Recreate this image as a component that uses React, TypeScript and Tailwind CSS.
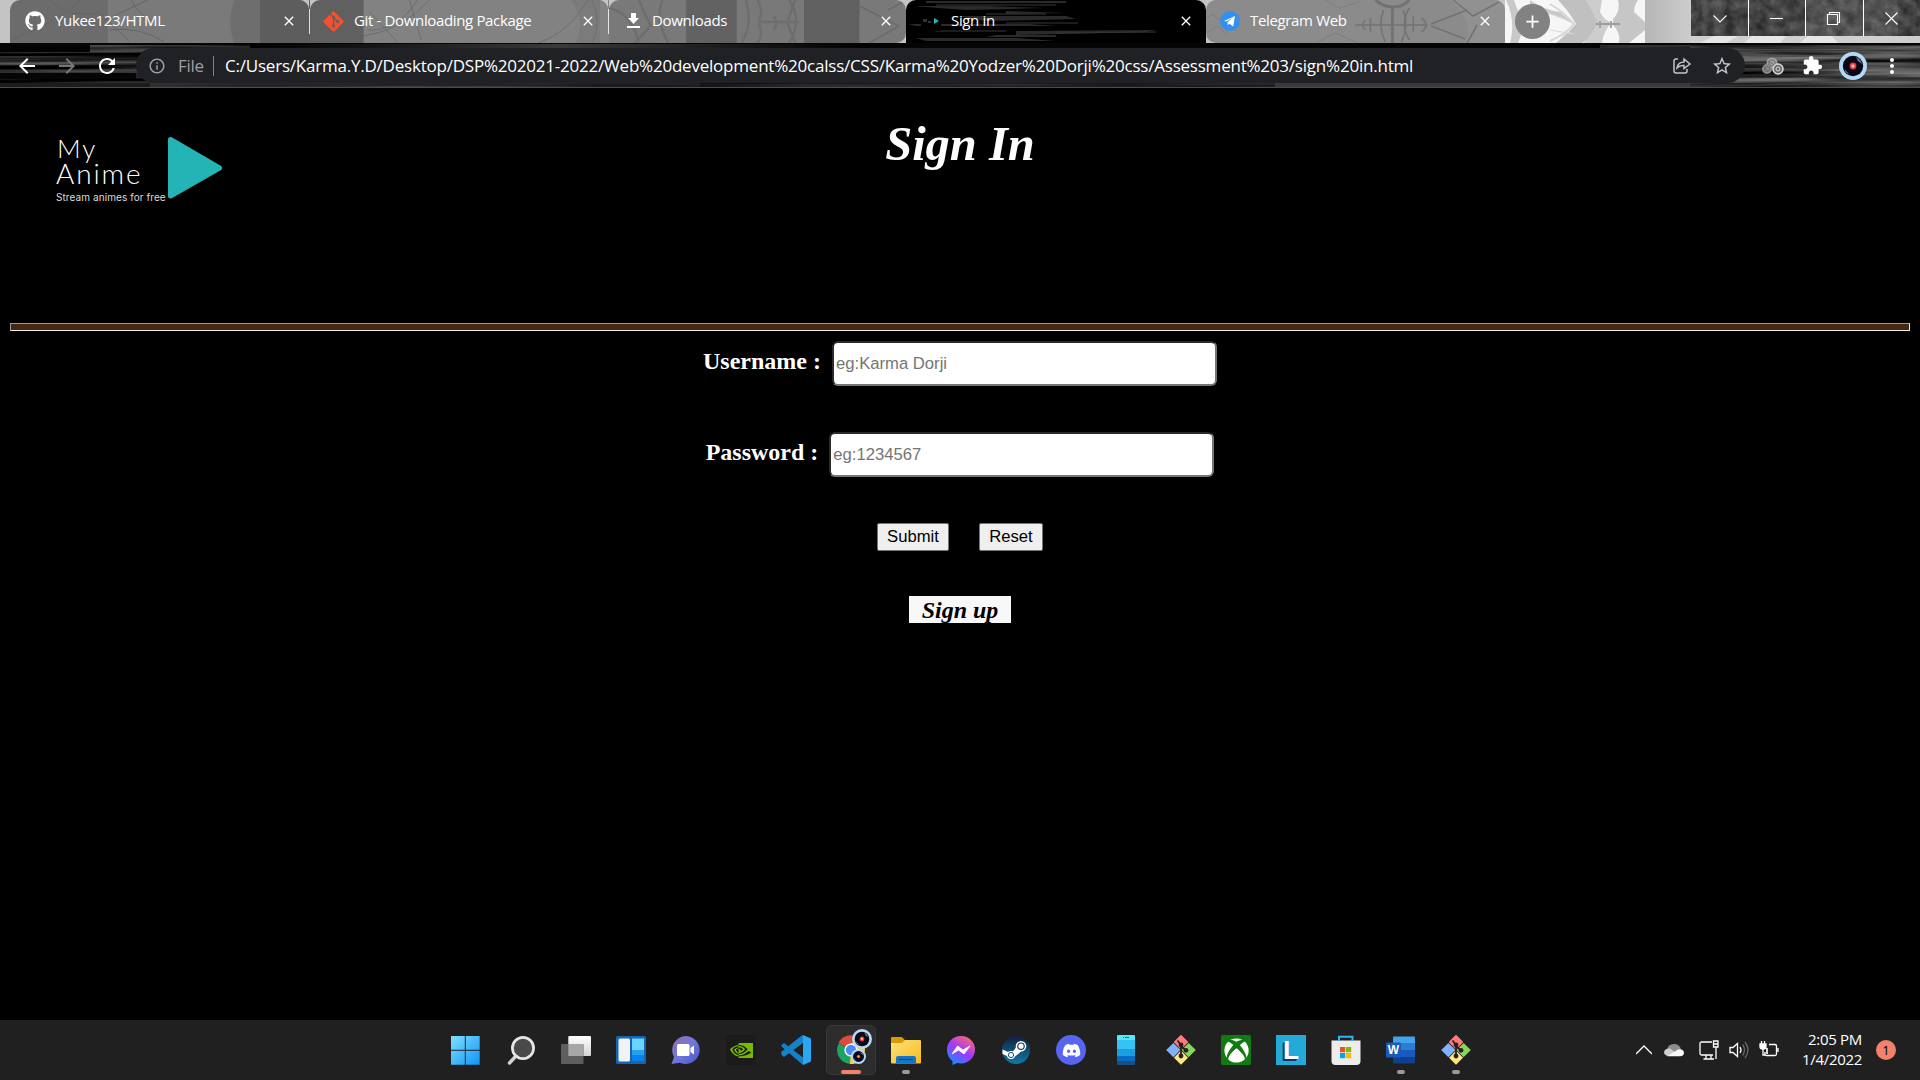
import React from "react";
import { FaGithub, FaGitAlt, FaDiscord, FaXbox } from "react-icons/fa";
import { MdArrowBack, MdArrowForward, MdRefresh, MdExtension, MdStarBorder, MdInfoOutline, MdMoreVert, MdClose, MdAdd } from "react-icons/md";
import { SiNvidia } from "react-icons/si";

const ui = "font-['Open_Sans','Noto_Sans',sans-serif]";

/* ---------- theme artwork ---------- */

function TabArt() {
  return (
    <svg className="absolute inset-0 h-full w-full" viewBox="0 0 1920 43" preserveAspectRatio="none">
      <defs>
        <filter id="soft" x="0" y="0" width="1" height="1"><feGaussianBlur stdDeviation=".7" /></filter>
        <linearGradient id="edge" x1="0" x2="1"><stop stopColor="#b6b6b6" /><stop offset="1" stopColor="#cccccc" /></linearGradient>
      </defs>
      <rect width="1920" height="43" fill="#c4c4c4" />
      <g filter="url(#soft)">
        <rect x="1505" width="140" height="43" fill="#f6f6f6" />
        <path d="M1514 0q4 14 12 22l-8 21h-8q6-22-4-43zM1530 0q14 10 30 12l14 12q-20-10-44-16z" fill="#c9c9c9" />
        <path d="M1558 0h30q6 14 18 23q-10 12-24 20h-26q12-10 20-19q-8-14-18-24z" fill="#c0c0c0" />
        <path d="M1586 0h16l-2 12q4 8 12 11q-8 6-10 20h-18q8-10 14-20q-6-12-12-23z" fill="#cdcdcd" />
        <path d="M1618 0h20q-4 6-4 12l11 10v8l-16 13h-10q2-10-6-18v-6q8-8 5-19z" fill="#c6c6c6" />
        <path d="M1550 4q14 8 24 20q-8 10-24 17" fill="none" stroke="#d6d6d6" strokeWidth="2" />
        <path d="M1596 24h24M1600 21v7M1611 21v7" stroke="#9d9d9d" strokeWidth="1.800" />
        <path d="M1550 30l24 4M1556 38l14-6M1545 12l22 8" stroke="#d9d9d9" />
      </g>
      <rect x="1645" width="46" height="43" fill="url(#edge)" />
      <path d="M1691 36h229v7h-229z" fill="#cfcfcf" />
      <path d="M1700 43l14-7h24l-12 7zM1744 43l8-7h34l-6 7zM1800 43l8-7h24l6 7z" fill="#e6e6e6" />
    </svg>
  );
}

function TabShade({ variant }: { variant: number }) {
  return (
    <svg className="absolute inset-0 h-full w-full" viewBox="0 0 300 43" preserveAspectRatio="none">
      <filter id="shadeSoft" x="0" y="0" width="1" height="1"><feGaussianBlur stdDeviation=".6" /></filter>
      {variant === 0 && (
        <g>
          <rect width="300" height="43" fill="#6c6c6c" />
          <path d="M98 0h132q-12 21 0 43H98z" fill="#7a7a7a" />
          <path d="M225 0h26v43h-26q-8-21 0-43z" fill="#6e6e6e" />
          <rect x="251" width="49" height="43" fill="#5d5d5d" />
          <path d="M2 40q45-18 70-40M40 0q20 20 50 12l30 30M96 20l42-20M100 30q30-4 55 12M122 0q4 12 20 20" stroke="#656565" fill="none" filter="url(#shadeSoft)" />
        </g>
      )}
      {variant === 1 && (
        <g>
          <rect width="300" height="43" fill="#606060" />
          <rect x="54" width="246" height="43" fill="#828282" />
          <path d="M262 0q16 20 6 43h24V0z" fill="#7b7b7b" />
          <path d="M58 30q30 2 50-30M60 12l28 30M100 0l12 40M54 36q40-6 66-36M230 43q30-10 50-43M284 0q10 20 0 43" stroke="#6d6d6d" fill="none" filter="url(#shadeSoft)" />
        </g>
      )}
      {variant === 2 && (
        <g>
          <rect width="300" height="43" fill="#797979" />
          <rect x="78" width="51" height="43" fill="#626262" />
          <rect x="197" width="56" height="43" fill="#606060" />
          <path d="M138 0q8 22-4 43M150 0q6 10 2 18v8q4 8-2 17M166 16q6 6 0 14M152 22h40M188 0l-8 22l8 21M0 8q24 6 30 35M30 0l12 26l-16 17M182 0q14 20 0 43M54 0q-8 20 6 43" stroke="#6e6e6e" fill="none" strokeWidth="2.500" filter="url(#shadeSoft)" />
          <path d="M253 6l40 20l-30 17M282 10l15-8" stroke="#6b6b6b" strokeWidth="1.500" fill="none" filter="url(#shadeSoft)" />
        </g>
      )}
      {variant === 4 && (
        <g>
          <rect width="300" height="43" fill="#8b8b8b" />
          <path d="M245 0h55v43h-40q10-22-15-43z" fill="#919191" />
          <g fill="none" stroke="#737373" strokeWidth="1.600" filter="url(#shadeSoft)">
            <path d="M170 0q8 7 18 7t16-7M187 7v36" strokeWidth="3" />
            <path d="M178 10q-6 16 2 32M198 10q6 16-2 32M150 25h72M160 20q-6 5 0 10M216 18q10 7 0 14M204 8q-10 16 0 32" />
            <path d="M165 18v14M208 16v16M226 24l36-14M226 26l34 13M248 0l20 16l26-14M262 43l10-18" />
            <path d="M0 18l8-4l4 6l8-6l6 8M2 32l10-6l8 8M120 0l14 8l20-6M110 43l20-10l22 10" stroke="#7e7e7e" strokeWidth="1" />
          </g>
        </g>
      )}
    </svg>
  );
}

function ToolbarArt() {
  return (
    <svg className="absolute inset-0 h-full w-full" viewBox="0 0 1920 46" preserveAspectRatio="none">
      <defs>
        <linearGradient id="fadeTop" x1="0" x2="1"><stop offset="0" stopColor="#000" /><stop offset=".5" stopColor="#3a3a3a" /><stop offset="1" stopColor="#000" /></linearGradient>
        <filter id="woodgrain" x="0" y="0" width="1" height="1" colorInterpolationFilters="sRGB">
          <feTurbulence type="fractalNoise" baseFrequency=".0035 .22" numOctaves="3" seed="11" />
          <feColorMatrix values=".7 0 0 0 -.22  .7 0 0 0 -.22  .7 0 0 0 -.22  0 0 0 0 1" />
        </filter>
        <filter id="woodgrainLight" x="0" y="0" width="1" height="1" colorInterpolationFilters="sRGB">
          <feTurbulence type="fractalNoise" baseFrequency=".006 .24" numOctaves="3" seed="4" />
          <feColorMatrix values=".75 0 0 0 -.13  .75 0 0 0 -.13  .75 0 0 0 -.13  0 0 0 0 1" />
        </filter>
      </defs>
      <rect width="1920" height="45" filter="url(#woodgrain)" />
      <rect x="1690" width="230" height="45" filter="url(#woodgrainLight)" />
      <path d="M0 0h1920v2H0z" fill="#060606" />
      <path d="M0 2h90v7H0z" fill="#030303" />
      <rect x="250" y="1" width="620" height="4" fill="url(#fadeTop)" />
      <path d="M870 1h730v4H870z" fill="#050505" />
      <path d="M0 30h136v6H0z" fill="#050505" />
      <path d="M0 40h150v4H0z" fill="#1c1c1c" />
      <path d="M150 40h550v4H150z" fill="#2c2c2c" opacity=".6" />
      <path d="M700 40h575v4H700z" fill="#161616" opacity=".6" />
      <path d="M1275 40h415v4h-415z" fill="#3a3a3a" />
      <path d="M0 44.500h1920" stroke="#4c4c4c" />
      <path d="M0 45.500h1920" stroke="#000" />
    </svg>
  );
}

function ActiveTabArt() {
  return (
    <svg className="absolute inset-0 h-full w-full" viewBox="0 0 300 43" preserveAspectRatio="none">
      <rect width="300" height="43" />
      <g filter="url(#shadeSoft)">
        <path d="M6 6h74l60 2l-80 2zM50 16h110l10 3l-90 2zM110 31l140-1l-10 2l-130 3zM10 38h100l40 3H20zM100 11l60 2l-60 1zM90 35h60v2H80zM2 24h120l30 2H10zM20 1h140v2H20z" fill="#2b2b2b" />
        <path d="M30 5h120M100 23h72M150 33l100-1M30 31h70M80 14h60" stroke="#363636" />
      </g>
    </svg>
  );
}

function StoneArt() {
  return (
    <svg className="absolute inset-0 h-full w-full" preserveAspectRatio="none">
      <filter id="stone" x="0" y="0" width="1" height="1" colorInterpolationFilters="sRGB">
        <feTurbulence type="fractalNoise" baseFrequency=".09" numOctaves="5" seed="6" />
        <feColorMatrix values=".32 0 0 0 .1  .32 0 0 0 .1  .32 0 0 0 .1  0 0 0 0 1" />
      </filter>
      <rect width="100%" height="100%" filter="url(#stone)" />
      <rect x="115" width="92" height="36" fill="#fff" opacity=".09" />
    </svg>
  );
}

/* ---------- browser chrome ---------- */

function Tab({ icon, title, variant, active, gap, tabClass }: { icon: React.ReactNode; title: string; variant: number; active?: boolean; gap: string; tabClass: string }) {
  return (
    <div className={`relative h-[43px] overflow-hidden ${tabClass}`}>
      {active ? <ActiveTabArt /> : <TabShade variant={variant} />}
      <div className="relative flex h-[42px] items-center pl-[15px] pr-[12px]">
        <div className="flex h-5 w-5 shrink-0 items-center justify-center">{icon}</div>
        <span className={`flex-1 whitespace-nowrap pb-[2px] text-[15px] leading-5 tracking-[-0.35px] text-white ${gap}`}>{title}</span>
        <MdClose className="h-4 w-4 text-white" />
      </div>
    </div>
  );
}

function Eye({ className }: { className: string }) {
  return (
    <svg className={className} viewBox="0 0 28 28">
      <circle cx="14" cy="14" r="14" fill="#b3d9f5" />
      <circle cx="14" cy="14" r="10.2" fill="#080716" />
      <path d="M17 5a10 10 0 0 1 6 7l-4-3zM5.500 17l5 5.500q-4-1-5-5.500" fill="#77758a" />
      <circle cx="14" cy="14" r="3.400" fill="#e0325c" />
      <circle cx="14" cy="14" r="1.700" fill="#ffc35c" />
    </svg>
  );
}

function TabStrip() {
  return (
    <div className="relative flex h-[43px]">
      <TabArt />
      <div className="relative flex pl-[10px]">
        <Tab variant={0} gap="ml-[10px]" tabClass="w-[299px] rounded-t-[10px]" title="Yukee123/HTML" icon={<FaGithub className="h-5 w-5 text-white" />} />
        <div className="flex w-px items-center bg-[#5d5d5d]"><div className="h-[25px] w-px bg-white/80" /></div>
        <Tab variant={1} gap="ml-[9px]" tabClass="w-[298px] rounded-t-[10px]" title="Git - Downloading Package" icon={<FaGitAlt className="h-[23px] w-[23px] shrink-0 -translate-x-[2px] text-[#f4502f]" />} />
        <div className="flex w-px items-center bg-[#828282]"><div className="h-[25px] w-px bg-white/80" /></div>
        <Tab variant={2} gap="ml-[8px]" tabClass="w-[297px] rounded-t-[10px] rounded-br-[10px]" title="Downloads" icon={<svg viewBox="0 0 20 20" className="h-5 w-5 -translate-x-px fill-white"><path d="M8 2h5v5h3l-5.500 6L5 7h3zM4 15h13v2H4z" /></svg>} />
        <Tab variant={3} active gap="ml-[10px]" tabClass="w-[300px] rounded-t-[10px]" title="Sign in" icon={<svg viewBox="0 0 20 20" className="h-5 w-5"><rect width="20" height="20" /><path d="M3 8v3M5 8v3M7 11h3" stroke="#666" /><path d="M13 7l5 3l-5 3z" fill="#24b4b6" /></svg>} />
        <Tab variant={4} gap="ml-[9px]" tabClass="w-[299px] rounded-t-[10px] rounded-bl-[10px]" title="Telegram Web" icon={<svg viewBox="0 0 20 20" className="h-5 w-5 -translate-x-px"><circle cx="10" cy="10" r="10" fill="#3390ec" /><path d="M4 10l11-5l-1.800 10.500l-4-2.800l-1.600 1.500v-3l5-4.600l-6 4z" fill="#fff" /></svg>} />
        <div className="ml-[10px] mt-1 flex h-[35px] w-[35px] items-center justify-center rounded-full bg-[#828282]">
          <MdAdd className="h-[21px] w-[21px] text-white" />
        </div>
      </div>
      <div className="relative ml-auto flex h-9 w-[229px] overflow-hidden">
        <StoneArt />
        <svg className="absolute inset-0" width="229" height="36" fill="none" stroke="#fff">
          <path d="M57.500 0v36M114.500 0v36M172.500 0v36" />
          <path d="M22.500 15.500l6.500 6.500l6.500-6.500M79 18.500h13M194.500 12.500l12 12M206.500 12.500l-12 12" strokeWidth="1.100" />
          <path d="M136.500 14.500h10v10h-10zM138.500 14v-1.500h10v10h-2" strokeWidth="1.100" />
        </svg>
      </div>
    </div>
  );
}

function Toolbar() {
  return (
    <div className="relative h-[46px]">
      <ToolbarArt />
      <div className="relative flex h-[45px] items-center">
        <div className="flex w-[136px] items-center gap-4 pl-[15px]">
          <MdArrowBack className="h-6 w-6 text-white" />
          <MdArrowForward className="h-6 w-6 text-[#777]" />
          <MdRefresh className="h-6 w-6 text-white" />
        </div>
        <div className="flex h-[35px] w-[1609px] items-center rounded-full bg-[#202124] pl-[12px] pr-3">
          <MdInfoOutline className="h-[18px] w-[18px] text-[#9aa0a6]" />
          <span className="ml-[12px] w-[26px] whitespace-nowrap text-[17px] tracking-[-0.3px] text-[#9aa0a6]">File</span>
          <div className="ml-[9px] h-5 w-px bg-[#80848a]" />
          <span className="ml-[11px] flex-1 whitespace-nowrap text-[17px] tracking-[-0.217px] text-white">
            C:/Users/Karma.Y.D/Desktop/DSP%202021-2022/Web%20development%20calss/CSS/Karma%20Yodzer%20Dorji%20css/Assessment%203/sign%20in.html
          </span>
          <svg className="mr-[19px] h-5 w-5" viewBox="0 0 20 20" fill="none" stroke="#c3c5c8" strokeWidth="1.500">
            <path d="M6 3H4Q2 3 2 5v10q0 2 2 2h9q2 0 2-2v-2" />
            <path d="M5 12q1-6 7-6V3l6 5l-6 4.500V9.500q-4-.5-7 2.500z" />
          </svg>
          <MdStarBorder className="h-[22px] w-[22px] text-[#c3c5c8]" />
        </div>
        <div className="flex items-center">
          <svg className="ml-[17px] h-[18px] w-[22px]" viewBox="0 0 22 18" fill="none">
            <circle cx="10" cy="6" r="5.500" fill="#a2a2a2" /><circle cx="5" cy="12" r="5" fill="#8a8a8a" />
            <g stroke="#6a6a6a"><circle cx="10" cy="6" r="3.200" /><circle cx="5" cy="12" r="2.500" /><path d="M6 4l8 5M1 9l5 5" /></g>
            <circle cx="16" cy="12" r="5" fill="#6d6d6d" stroke="#d5d5d5" strokeWidth="1.600" /><circle cx="16" cy="12" r="2" stroke="#d5d5d5" />
          </svg>
          <MdExtension className="ml-[18px] h-[21px] w-[21px] text-white" />
          <Eye className="ml-[16px] h-7 w-7" />
          <MdMoreVert className="ml-[13px] h-6 w-6 text-white" />
        </div>
      </div>
    </div>
  );
}

/* ---------- page ---------- */

const fieldClass =
  "h-[45px] w-[385px] rounded-[6px] border-2 border-b-[#767676] border-l-[#2b2b2b] border-r-[#767676] border-t-[#2b2b2b] bg-white px-[2px] font-['Liberation_Sans',sans-serif] text-[16.67px] placeholder:text-[#757575]";

function Page() {
  return (
    <main className="flex-1 bg-black px-[10px] font-['Liberation_Serif',serif] text-white">
      <header className="flex h-[234px] justify-between">
        <div className="flex w-[300px] pl-[46px] pt-[47px]">
          <div className="w-[112px]">
            <div className="font-['Lato',sans-serif] font-light">
              <div className="pl-[1px] text-[26px] leading-[25px] tracking-[2px]">My</div>
              <div className="text-[28px] leading-[25px] tracking-[1.9px]">Anime</div>
            </div>
            <div className="mt-[4px] whitespace-nowrap font-['Inter',sans-serif] text-[10px] leading-[14px] tracking-[0.08px] text-[#dcdcdc]">Stream animes for free</div>
          </div>
          <svg className="h-[64px] w-[55px]" viewBox="0 0 55 64"><path d="M2.500 3.500v56.500l49-28z" fill="#24b4b6" stroke="#24b4b6" strokeWidth="5" strokeLinejoin="round" /></svg>
        </div>
        <h1 className="pt-[26px] text-[48.500px] font-bold italic leading-[57px]">Sign In</h1>
        <div className="w-[300px]" />
      </header>
      <div className="h-2 border border-b-[#eeeeee] border-l-[#9a9a9a] border-r-[#eeeeee] border-t-[#9a9a9a] bg-[#462810]" />
      <form className="flex flex-col items-center pt-[10px]" onSubmit={(e) => e.preventDefault()}>
        <div className="flex gap-[11px]">
          <label className="mt-[7px] whitespace-pre text-[24px] font-bold leading-[27px]">Username :</label>
          <input placeholder="eg:Karma Dorji" className={fieldClass} />
        </div>
        <div className="mt-[46px] flex gap-[11px]">
          <label className="mt-[7px] whitespace-pre text-[24px] font-bold leading-[27px]">Password :</label>
          <input placeholder="eg:1234567" className={fieldClass} />
        </div>
        <div className="mt-[46px] flex gap-[30px] font-['Liberation_Sans',sans-serif] text-[16.67px] leading-[19px] text-black">
          <button className="h-7 w-[72px] rounded-[2px] border border-[#767676] bg-[#efefef] pb-[2px]">Submit</button>
          <button className="h-7 w-[64px] rounded-[2px] border border-[#767676] bg-[#efefef] pb-[2px]">Reset</button>
        </div>
        <a className="mt-[45px] h-[27px] w-[102px] overflow-hidden bg-[#f8f8f8] text-center text-[24px] font-bold italic leading-[28px] text-black">Sign up</a>
      </form>
    </main>
  );
}

/* ---------- taskbar icons, each on a 30x30 grid ---------- */

function Ico({ children }: { children: React.ReactNode }) {
  return <svg className="h-[30px] w-[30px]" viewBox="0 0 30 30">{children}</svg>;
}

const GitDiamond = () => (
  <Ico>
    <path d="M15 0l7 7l-7 7.500l-7-7.500z" fill="#ff7b7b" stroke="#ff7b7b" strokeWidth=".6" strokeLinejoin="round" />
    <path d="M7.400 8l7 7l-7 7.200l-7.200-7.200z" fill="#80b3ff" />
    <path d="M22.600 8l7.200 7l-7.200 7.200l-7-7.200z" fill="#87d75f" />
    <path d="M15 15.600l7 7.200l-7 7l-7-7z" fill="#ffe680" />
    <path d="M11.500 5.500l3.500 4.500v11M15 11l5 4.500" stroke="#2a2020" strokeWidth="1.800" fill="none" />
    <circle cx="15" cy="10" r="2.400" fill="#2a2020" /><circle cx="20" cy="15.300" r="2.400" fill="#2a2020" /><circle cx="15" cy="21" r="2.400" fill="#2a2020" />
  </Ico>
);

function Chrome() {
  return (
    <div className="relative h-[30px] w-[30px]">
      <Ico>
        <path d="M15 15L2.500 8a14 14 0 0 1 25 0z" fill="#dd4b3e" />
        <path d="M15 15L2.700 8.500A14 14 0 0 0 14 29l5-10z" fill="#1da462" />
        <path d="M15 15h13.800A14 14 0 0 1 14 29z" fill="#ffcd46" />
        <path d="M15 8h13a14 14 0 0 1 .8 8H15z" fill="#ffcd46" />
        <circle cx="15" cy="15" r="6.600" fill="#fff" /><circle cx="15" cy="15" r="5.200" fill="#4c8bf5" />
      </Ico>
      <Eye className="absolute left-[15px] top-[14px] h-[15px] w-[15px]" />
      <Eye className="absolute left-[16px] top-[-6px] h-5 w-5" />
    </div>
  );
}

const apps: { icon: React.ReactNode; state?: string }[] = [
  { icon: <Ico><defs><linearGradient id="win" x1="0" y1="0" x2="1" y2="1"><stop stopColor="#7fdfff" /><stop offset="1" stopColor="#0f95f5" /></linearGradient></defs><path d="M0 1h13.800v13.800H0zM14.700 1h14v13.800h-14zM0 15.700h13.800v14H0zM14.700 15.700h14v14h-14z" fill="url(#win)" /></Ico> },
  { icon: <Ico><path d="M10 21L3.500 28" stroke="#d4d4d4" strokeWidth="3.400" strokeLinecap="round" /><circle cx="17" cy="13" r="10.600" fill="#4a4a4a" stroke="#e6e6e6" strokeWidth="2.700" /></Ico> },
  { icon: <Ico><defs><linearGradient id="tv" x1="0" y1="0" x2="0" y2="1"><stop stopColor="#fff" /><stop offset="1" stopColor="#d5d5d5" /></linearGradient></defs><rect x="7.300" y="1" width="22.700" height="20" rx="1" fill="url(#tv)" /><rect x="0" y="9" width="22.500" height="20" rx="1" fill="#5e5e5e" /><path d="M7.300 9h15.200v12H7.300z" fill="#a7a7a7" /></Ico> },
  { icon: <Ico><rect y="1" width="30" height="28" rx="1.500" fill="#1565b5" /><rect x="2.500" y="3.500" width="11.500" height="23" rx="1.500" fill="#f2f2f2" /><path d="M16 3.500h12v12H16z" fill="#68d5ff" /><path d="M16 16h12v4.500H16z" fill="#21a3f5" /><path d="M16 20.500h12v5.500H16z" fill="#0883ea" /></Ico> },
  { icon: <Ico><defs><linearGradient id="chat" x1="0" y1="0" x2="1" y2="1"><stop stopColor="#9a6bb0" /><stop offset=".5" stopColor="#7078d8" /><stop offset="1" stopColor="#4a51c8" /></linearGradient></defs><path d="M15 1a14 14 0 1 1-6 26.800L.500 29L3 22A14 14 0 0 1 15 1z" fill="url(#chat)" /><rect x="6" y="9" width="12.500" height="12" rx="1.500" fill="#fff" /><path d="M19.500 13l3.500-2.500v9L19.500 17z" fill="#fff" /></Ico> },
  { icon: <div className="flex h-[30px] w-[30px] items-center justify-center bg-[#1b1b1b]"><SiNvidia className="h-[23px] w-[23px] text-[#76b900]" /></div> },
  { icon: <Ico><path d="M22 0L2 19.500l-2-2V17l20-16z" fill="#1479bd" /><path d="M22 0v8L3 22L.500 20v-2z" fill="#1683c9" /><path d="M3 8l19 14.500V30L.500 11.500V10z" fill="#1380c8" /><path d="M22 0l8 3.500v23L22 30z" fill="#29a7f2" /></Ico> },
  { icon: <Chrome />, state: "active" },
  { icon: <Ico><defs><linearGradient id="fold" x1="0" y1="0" x2="1" y2="1"><stop stopColor="#ffe27a" /><stop offset="1" stopColor="#f7bb1c" /></linearGradient></defs><path d="M0 3q0-1 1-1h9q1 0 2 1l1.500 2H29v10H0z" fill="#d99a06" /><path d="M0 8h11l3-3h15q1 0 1 1v21.500q0 1-1 1H1q-1 0-1-1z" fill="url(#fold)" /><path d="M5 28.500V23q0-2 2-2h16q2 0 2 2v5.500z" fill="#1477c5" /><path d="M8 24.500h14" stroke="#0b4a82" strokeWidth="1.200" /></Ico>, state: "open" },
  { icon: <Ico><defs><linearGradient id="mes" x1=".2" y1="1" x2=".8" y2="0"><stop stopColor="#1092ff" /><stop offset=".5" stopColor="#a237ff" /><stop offset="1" stopColor="#ff6a70" /></linearGradient></defs><path d="M15 1c8 0 14 6 14 13.500S23 28.500 15 28.500c-1.500 0-2.500-.2-4-.5l-4.500 2v-4C3 23.500 1 19.500 1 14.700C1 7 7 1 15 1z" fill="url(#mes)" /><path d="M6 19l5.500-8l5.500 4l7-4l-6 8l-5.500-4z" fill="#fff" stroke="#fff" strokeWidth=".8" /></Ico> },
  { icon: <Ico><defs><linearGradient id="st" x1="0" y1="0" x2="0" y2="1"><stop stopColor="#12203f" /><stop offset="1" stopColor="#1078a8" /></linearGradient></defs><circle cx="15" cy="15" r="14" fill="url(#st)" /><path d="M1.500 14.500l9 4L16 11l7-.5l-1 4.500l-8 6.500l-4 2.500l-4-3L1.500 19z" fill="#fff" /><circle cx="20" cy="11.200" r="5.300" fill="#fff" /><circle cx="20" cy="11.200" r="3.200" fill="#fff" stroke="#1b3450" strokeWidth="1.200" /><circle cx="10" cy="20" r="4" fill="#fff" /><circle cx="10" cy="20" r="2.600" fill="none" stroke="#1b4c70" /></Ico> },
  { icon: <div className="flex h-[30px] w-[30px] items-center justify-center rounded-full bg-[#5865f2]"><FaDiscord className="h-[19px] w-[19px] text-white" /></div> },
  { icon: <Ico><path d="M6 1q0-1 1-1h16q1 0 1 1v4H6z" fill="#58e6fb" /><path d="M6 5h18v9H6z" fill="#35c3f3" /><path d="M6 14h18v7H6z" fill="#1c9de0" /><path d="M6 21h18v5H6z" fill="#0a6cc0" /><path d="M6 26h18v3q0 1-1 1H7q-1 0-1-1z" fill="#1a4f86" /><path d="M14 2.500h4M12 2.500h1" stroke="#176b92" /></Ico> },
  { icon: <GitDiamond /> },
  { icon: <div className="flex h-[30px] w-[30px] items-center justify-center rounded-[2px] bg-[#107c10]"><FaXbox className="h-[25px] w-[25px] text-white" /></div> },
  { icon: <div className="flex h-[30px] w-[30px] items-center justify-center bg-[#24aad8] font-['Liberation_Sans',sans-serif] text-[26px] font-bold leading-[30px] text-white [text-shadow:-1px_1px_#12386b,-2px_2px_#12386b]">L</div> },
  { icon: <Ico><path d="M8 7V1.800h13.500V7" fill="none" stroke="#2fb4f0" strokeWidth="2" /><path d="M.500 5.500h29V26q0 4-4 4h-21q-4 0-4-4z" fill="#ededed" /><path d="M8 6V5M21.500 6V5" stroke="#2fb4f0" strokeWidth="2" /><path d="M9 12h5.200v5.200H9z" fill="#f25022" /><path d="M15 12h5.200v5.200H15z" fill="#7fba00" /><path d="M9 18h5.200v5.200H9z" fill="#00a4ef" /><path d="M15 18h5.200v5.200H15z" fill="#ffb900" /></Ico> },
  { icon: <div className="relative h-[30px] w-[30px]"><Ico><path d="M7 2.500q0-1 1-1h20q1 0 1 1V8H7z" fill="#41a5ee" /><path d="M7 8h22v7H7z" fill="#2b7cd3" /><path d="M7 15h22v7H7z" fill="#185abd" /><path d="M7 22h22v5.500q0 1-1 1H8q-1 0-1-1z" fill="#103f91" /><rect y="7.500" width="15" height="15" rx="1.200" fill="#185abd" /></Ico><span className="absolute left-0 top-[7px] w-[15px] text-center font-['Liberation_Sans',sans-serif] text-[12px] font-bold leading-4 text-white">W</span></div>, state: "open" },
  { icon: <GitDiamond />, state: "open" },
];

function Taskbar() {
  return (
    <footer className="flex h-[60px] items-center bg-[#202020] pl-[441px]">
      <div className="flex gap-[5px]">
        {apps.map((a, i) => (
          <div key={i} className={`relative flex h-[50px] w-[50px] items-center justify-center rounded-[5px] ${a.state === "active" ? "border border-[#373737] bg-[#2d2d2d]" : ""}`}>
            {a.icon}
            {a.state === "active" && <div className="absolute bottom-0 left-[14px] h-1 w-5 rounded-full bg-[#f4826b]" />}
            {a.state === "open" && <div className="absolute bottom-px left-[21px] h-1 w-2 rounded-full bg-[#9a9a9a]" />}
          </div>
        ))}
      </div>
      <div className="ml-auto flex items-center text-white">
        <svg className="h-5 w-4" viewBox="0 0 16 20" fill="none" stroke="#fff" strokeWidth="1.300"><path d="M0 14l8-8l8 8" /></svg>
        <svg className="ml-3 h-5 w-5" viewBox="0 0 20 20"><path d="M3 10q1-6 7-6q5 0 7 5l-7 4z" fill="#8d8d8d" /><path d="M0 12q1-4 6-3.500L15 15l-11 1q-4-1-4-4z" fill="#cfcfcf" /><path d="M3 16.200L14 9.500q5-1 6 3q0 3.700-4 3.700z" fill="#fafafa" /></svg>
        <svg className="ml-[15px] h-5 w-5" viewBox="0 0 20 20" fill="none" stroke="#fff" strokeWidth="1.300"><path d="M13 2H2.500Q1 2 1 3.500v10Q1 15 2.500 15H14M7 15v4M12 15v4M4.500 19H15M14.500 1h4.500v6h-4.500zM14.500 4H19M17 7v12" /></svg>
        <svg className="ml-[10px] h-5 w-5" viewBox="0 0 20 20" fill="none" stroke="#fff" strokeWidth="1.300"><path d="M1 7.500h3l4.500-4v13l-4.500-4H1z" /><path d="M11 7q2 3 0 6" /><path d="M13.500 4.500q4 5.500 0 11M16 2q6 8 0 16" stroke="#686868" /></svg>
        <svg className="ml-[10px] h-5 w-5" viewBox="0 0 20 20" fill="none" stroke="#fff" strokeWidth="1.300"><path d="M10 4.500h6q1.500 0 1.500 1.500v8q0 1.500-1.500 1.500H7.500Q6 15.500 6 14v-2M19 8v4" /><path d="M1 4h6v3q0 2-3 2q-3 0-3-2z" fill="#fff" /><path d="M2.500 1v3M5.500 1v3M4 9v6h2" /><path d="M7 8h2v6H7z" fill="#ddd" stroke="none" /></svg>
        <div className="ml-[15px] w-[68px] whitespace-nowrap pb-[2px] text-right text-[15px] leading-5 tracking-[-0.3px]">
          <div>2:05 PM</div>
          <div>1/4/2022</div>
        </div>
        <div className="ml-[14px] mr-6 flex h-5 w-5 items-center justify-center rounded-full bg-[#f4826b] text-[13px] leading-5 text-black">1</div>
      </div>
    </footer>
  );
}

export default function App() {
  return (
    <div className={`flex h-[1080px] w-[1920px] flex-col overflow-hidden bg-black ${ui}`}>
      <TabStrip />
      <Toolbar />
      <Page />
      <Taskbar />
    </div>
  );
}
